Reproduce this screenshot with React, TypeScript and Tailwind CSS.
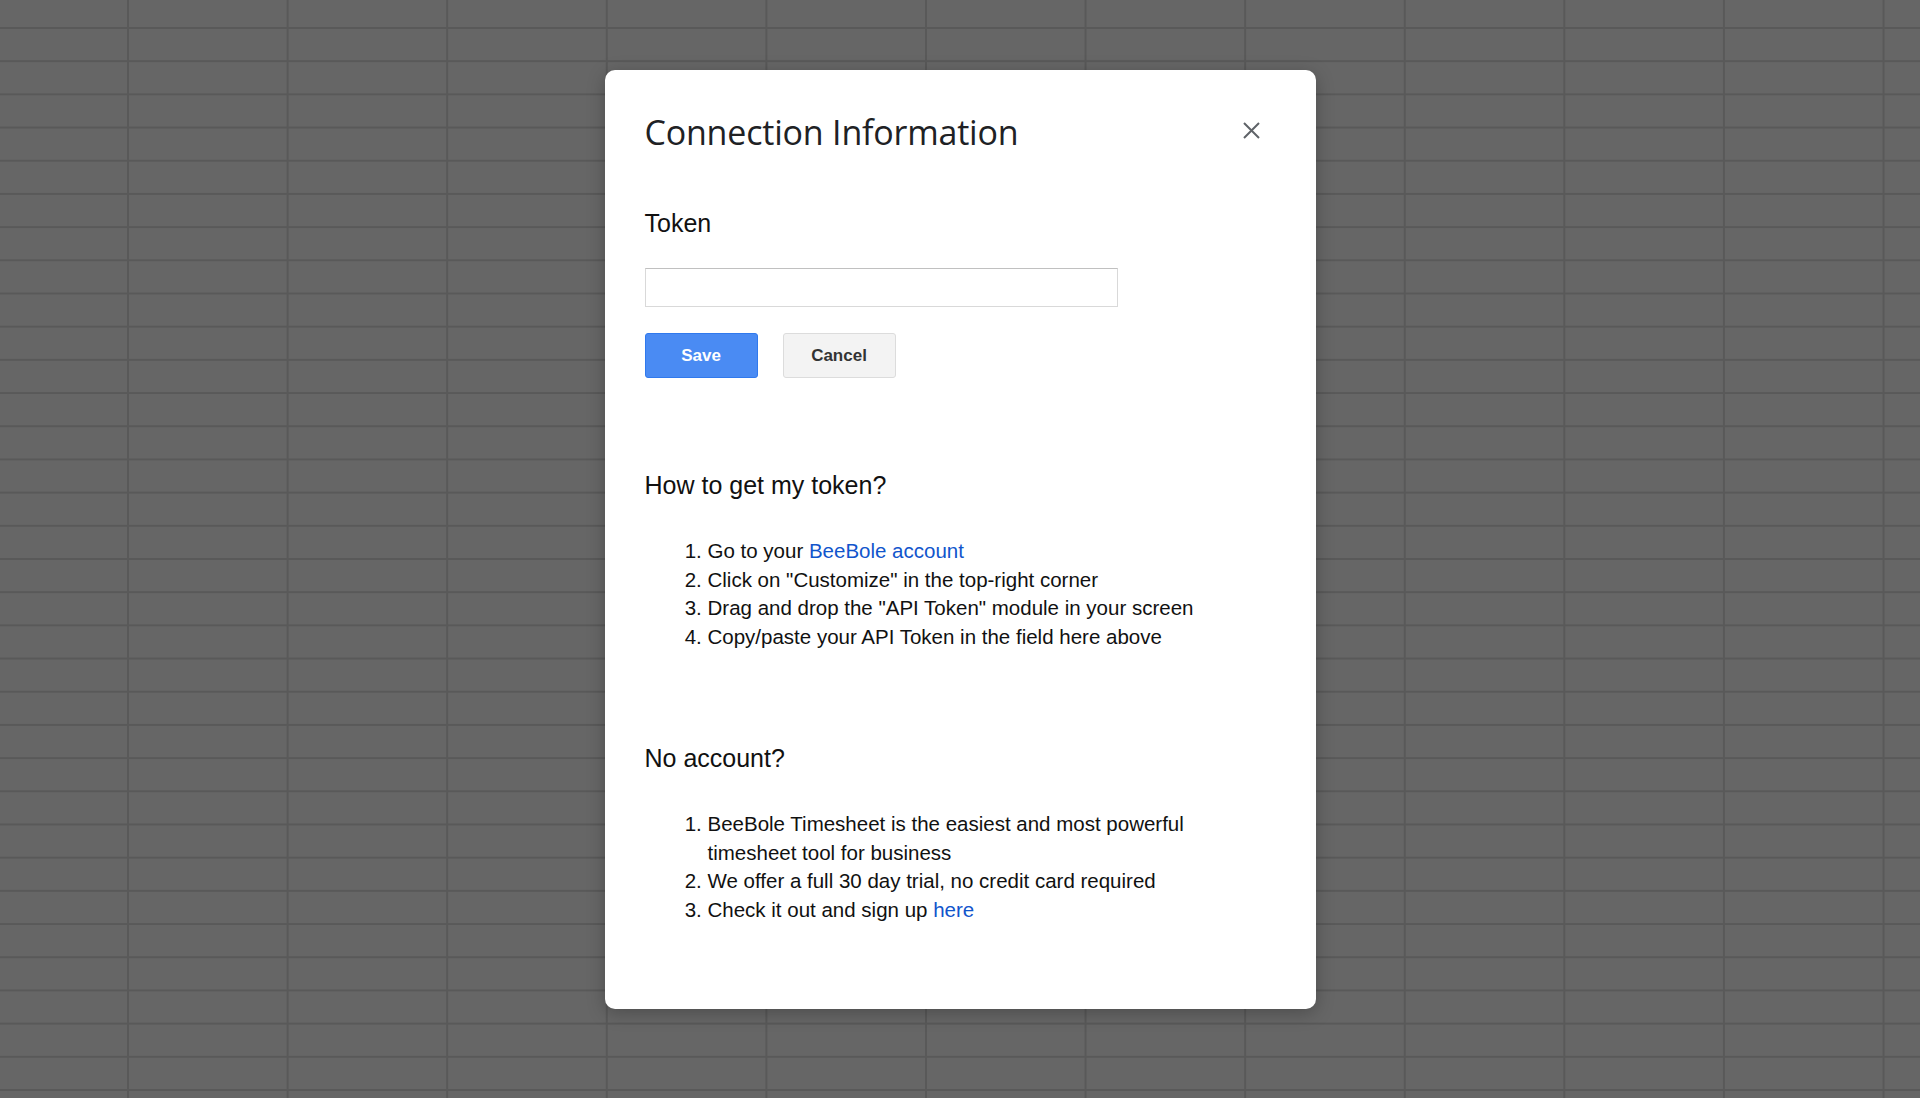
import React from "react";

const howSteps = [
    { text: "Go to your ", link: "BeeBole account" },
    { text: "Click on \"Customize\" in the top-right corner" },
    { text: "Drag and drop the \"API Token\" module in your screen" },
    { text: "Copy/paste your API Token in the field here above" },
];

const noAccountSteps = [
    { text: "BeeBole Timesheet is the easiest and most powerful timesheet tool for business" },
    { text: "We offer a full 30 day trial, no credit card required" },
    { text: "Check it out and sign up ", link: "here" },
];

function StepList({ steps }: { steps: { text: string; link?: string }[] }) {
    return (
        <ol className="list-decimal pl-[63px] w-[585px] text-[20.5px] leading-[28.7px] text-[#111]">
            {steps.map((step) => (
                <li key={step.text}>
                    {step.text}
                    {step.link && <a className="text-[#1155cc] cursor-pointer">{step.link}</a>}
                </li>
            ))}
        </ol>
    );
}

export default function App() {
    return (
        <div className="w-full h-[1098px] overflow-hidden bg-[#666666] bg-[linear-gradient(to_right,#595959_1.5px,transparent_1.5px),linear-gradient(to_bottom,#595959_1.5px,transparent_1.5px)] bg-[size:159.6px_33.2px] bg-[position:127px_27px] flex justify-center pt-[70px]">

            <div className="w-[711px] h-[939px] bg-white rounded-[10px] shadow-[0_4px_18px_rgba(0,0,0,0.25)] px-[40px] pt-[42px] font-['Liberation_Sans',Arial,sans-serif]">

                <div className="flex items-center justify-between h-[40px]">
                    <h1 className="font-['Open_Sans',Roboto,sans-serif] text-[34px] leading-[40px] text-[#202124] tracking-[-0.2px]">
                        Connection Information
                    </h1>
                    <button className="mr-[16px] mb-[3px] w-[17px] h-[17px] text-[#5f6368]">
                        <svg viewBox="0 0 17 17" width="17" height="17">
                            <path d="M1 1L16 16M16 1L1 16" stroke="currentColor" strokeWidth="2" fill="none" />
                        </svg>
                    </button>
                </div>

                <h2 className="mt-[56px] text-[25px] leading-[30px] text-[#111]">Token</h2>

                <input
                    type="text"
                    className="mt-[30px] block w-[473px] h-[39px] border border-[#d9d9d9] border-t-[#c0c0c0] outline-none px-2 text-[18px]"
                />

                <div className="flex gap-[25px] mt-[26px]">
                    <button className="w-[113px] h-[45px] rounded-[3px] bg-[#4a8bf3] border border-[#3079ed] text-white font-bold text-[17px]">
                        Save
                    </button>
                    <button className="w-[113px] h-[45px] rounded-[3px] bg-[#f3f3f3] border border-[#dcdcdc] text-[#333] font-bold text-[17px]">
                        Cancel
                    </button>
                </div>

                <h2 className="mt-[92px] text-[25px] leading-[30px] text-[#111]">How to get my token?</h2>
                <div className="mt-[37px]">
                    <StepList steps={howSteps} />
                </div>

                <h2 className="mt-[91px] text-[25px] leading-[30px] text-[#111]">No account?</h2>
                <div className="mt-[37px]">
                    <StepList steps={noAccountSteps} />
                </div>

            </div>
        </div>
    );
}
